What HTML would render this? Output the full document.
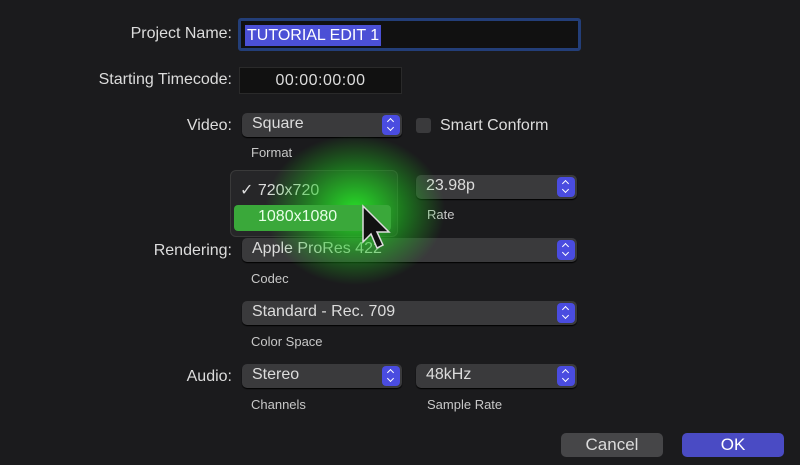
<!DOCTYPE html><html><head><style>
body{margin:0;width:800px;height:465px;background:#1b1b1d;font-family:"Liberation Sans",sans-serif;color:#dcdcdc;overflow:hidden;position:relative}
div{position:absolute;box-sizing:border-box}
.l{font-size:16px;text-align:right;width:240px;left:-8px}
.s{font-size:13px;color:#c8c8c8}
.p{background:#3a3a3c;border-radius:5px;height:24px;font-size:16px;padding:2px 10px;box-shadow:0 1px 1px #000}
.a{position:absolute;right:2px;top:2px;width:18px;height:20px;background:#4a4ce0;border-radius:4px}
.a:before{content:"";position:absolute;left:6px;top:4px;width:4px;height:4px;border-left:1.5px solid #fff;border-top:1.5px solid #fff;transform:rotate(45deg)}
.a:after{content:"";position:absolute;left:6px;top:10px;width:4px;height:4px;border-right:1.5px solid #fff;border-bottom:1.5px solid #fff;transform:rotate(45deg)}
.b{border-radius:5px;height:24px;width:102px;font-size:17px;text-align:center;line-height:24px}
</style></head><body>
<div class="l" style="top:25px">Project Name:</div>
<div style="left:238px;top:18px;width:343px;height:33px;border:3px solid #233e78;background:#111;border-radius:3px"></div>
<div style="left:245px;top:25px;height:21px;background:#4b50d6;color:#fff;font-size:16px;padding:1px 2px;line-height:19px">TUTORIAL EDIT 1</div>
<div class="l" style="top:71px">Starting Timecode:</div>
<div style="left:239px;top:67px;width:163px;height:27px;background:#111;border:1px solid #2a2a2a;text-align:center;font-size:16px;line-height:26px;letter-spacing:.5px">00:00:00:00</div>
<div class="l" style="top:117px">Video:</div>
<div class="p" style="left:242px;top:113px;width:160px">Square<span class="a"></span></div>
<div style="left:416px;top:118px;width:15px;height:15px;background:#3a3a3c;border-radius:3px"></div>
<div style="left:440px;top:117px;font-size:16px">Smart Conform</div>
<div class="s" style="left:251px;top:145px">Format</div>
<div class="p" style="left:416px;top:175px;width:161px">23.98p<span class="a"></span></div>
<div class="s" style="left:427px;top:207px">Rate</div>
<div class="l" style="top:242px">Rendering:</div>
<div class="p" style="left:242px;top:238px;width:335px">Apple ProRes 422<span class="a"></span></div>
<div class="s" style="left:251px;top:271px">Codec</div>
<div class="p" style="left:242px;top:301px;width:335px">Standard - Rec. 709<span class="a"></span></div>
<div class="s" style="left:251px;top:334px">Color Space</div>
<div class="l" style="top:368px">Audio:</div>
<div class="p" style="left:242px;top:364px;width:160px">Stereo<span class="a"></span></div>
<div class="p" style="left:416px;top:364px;width:161px">48kHz<span class="a"></span></div>
<div class="s" style="left:251px;top:397px">Channels</div>
<div class="s" style="left:427px;top:397px">Sample Rate</div>
<div class="b" style="left:561px;top:433px;background:#464648">Cancel</div>
<div class="b" style="left:682px;top:433px;background:#4a4bc4;color:#fff">OK</div>
<div style="left:230px;top:170px;width:168px;height:67px;background:#262628;border:1px solid #3a3a3a;border-radius:6px"></div>
<div style="left:240px;top:180px;font-size:16px">✓ 720x720</div>
<div style="left:265px;top:135px;width:180px;height:150px;border-radius:50%;background:radial-gradient(closest-side,rgba(40,240,40,.9),rgba(30,200,30,.5) 55%,rgba(0,120,0,0))"></div>
<div style="left:234px;top:205px;width:157px;height:26px;background:#3aa83a;border-radius:4px;font-size:16px;padding:3px 24px;color:#e8ffe8">1080x1080</div>
<svg style="position:absolute;left:360px;top:204px" width="34" height="48"><path d="M3 2 L3 38 L11 30 L17 44 L23 41 L17 28 L29 28 Z" fill="#111" stroke="#ddd" stroke-width="1.5"/></svg>
</body></html>
